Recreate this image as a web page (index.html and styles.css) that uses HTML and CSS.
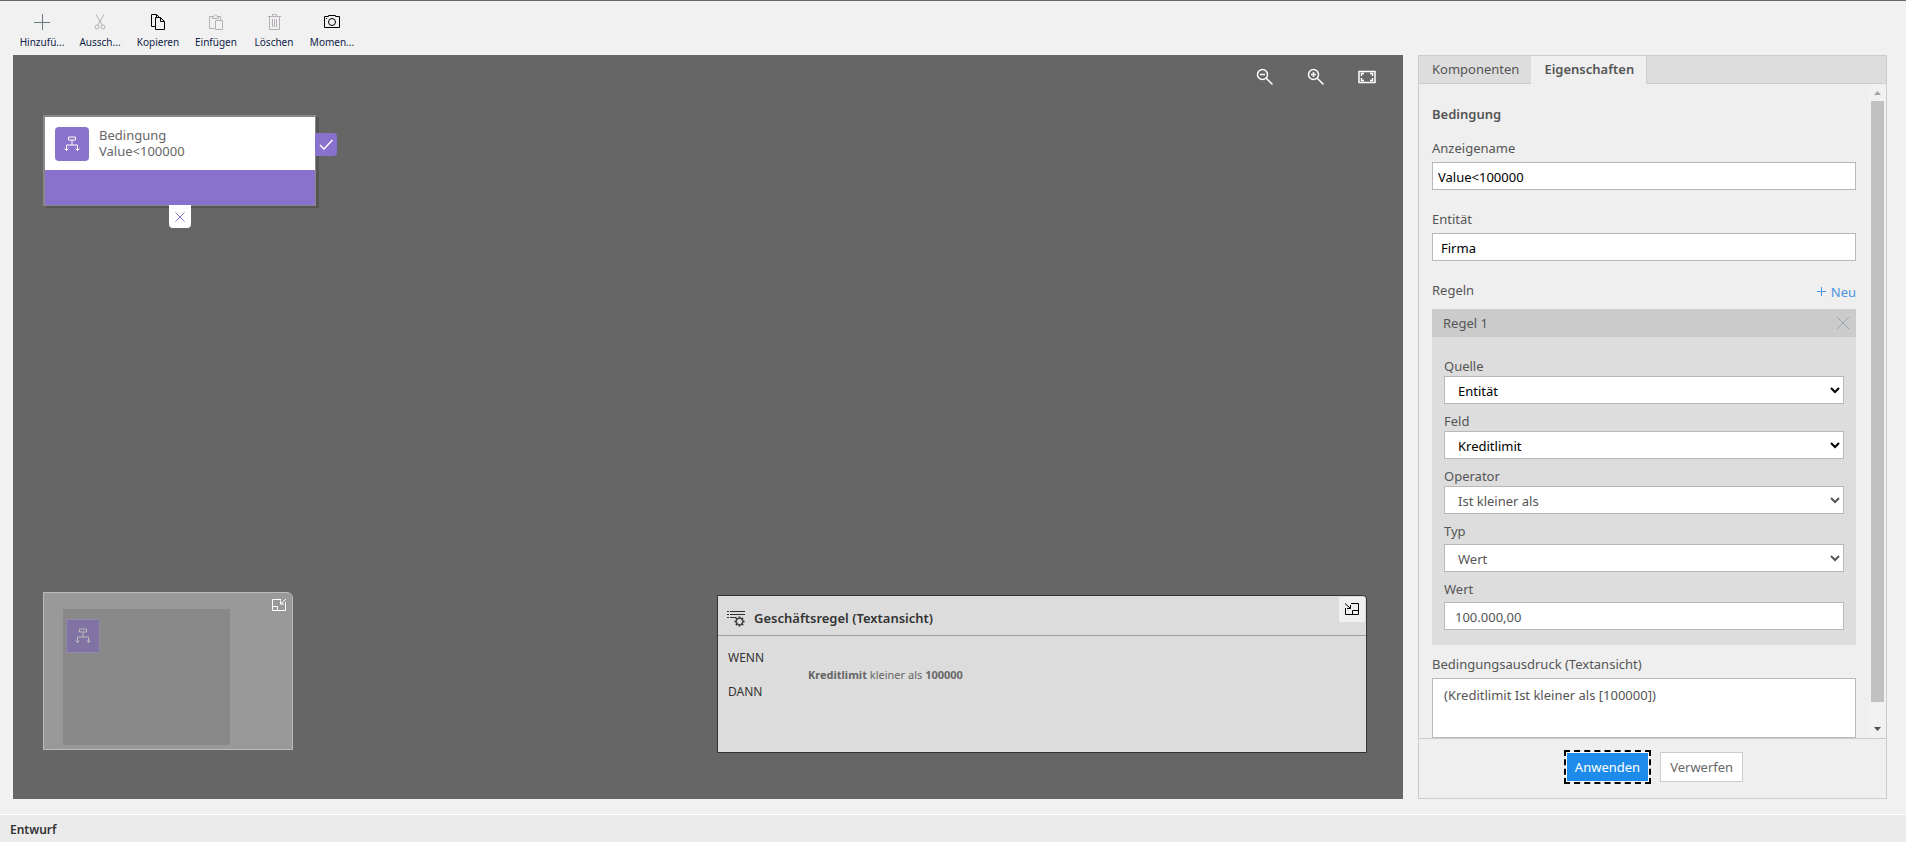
FILE: index.html
```html
<!DOCTYPE html>
<html lang="de">
<head>
<meta charset="utf-8">
<title>Geschäftsregel</title>
<link rel="stylesheet" href="styles.css">
</head>
<body>
<div class="app">
  <header class="toolbar">
    <button class="tool tool-add" type="button">
      <svg class="tool-icon" viewBox="0 0 16 16"><path d="M8.500 0v16M0 8.500h16"/></svg>
      <span>Hinzufü...</span>
    </button>
    <button class="tool tool-off" type="button">
      <svg class="tool-icon" viewBox="0 0 16 16"><path d="M4 .5l6.200 10.500M12 .5L5.800 11"/><circle cx="5" cy="13" r="2"/><circle cx="11" cy="13" r="2"/></svg>
      <span>Aussch...</span>
    </button>
    <button class="tool" type="button">
      <svg class="tool-icon" viewBox="0 0 16 16"><path d="M5.500 12.500h-4V.5h5l3 3M6.500.5v3M5.500 3.500h5l4 4v8h-9zM10.500 3.500v4h4"/></svg>
      <span>Kopieren</span>
    </button>
    <button class="tool tool-off" type="button">
      <svg class="tool-icon" viewBox="0 0 16 16"><path d="M6.500 14.500h-5v-12h3M9.500 2.500h3v4M4.500 4.500v-2h1.500a1.500 1.500 0 0 1 3 0h1.500v2zM7.500 6.500h7v9h-7z"/></svg>
      <span>Einfügen</span>
    </button>
    <button class="tool tool-off" type="button">
      <svg class="tool-icon" viewBox="0 0 16 16"><path d="M2 2.500h13M6.500 2.500v-2h4v2M3.500 2.500v13h10v-13M6.500 5v8M8.500 5v8M10.500 5v8"/></svg>
      <span>Löschen</span>
    </button>
    <button class="tool" type="button">
      <svg class="tool-icon" viewBox="0 0 16 16"><path d="M.5 2.500h4v-1h7v1h4v11H.5z"/><circle cx="8" cy="8" r="3.500"/><path d="M2 4.500h1"/></svg>
      <span>Momen...</span>
    </button>
  </header>

  <main class="workspace">
    <section class="canvas" aria-label="Zeichenfläche">
      <div class="zoom-bar">
        <button class="zoom-btn" type="button" aria-label="Verkleinern">
          <svg viewBox="0 0 18 18"><circle cx="6.500" cy="6.500" r="5"/><path d="M10 10l6.500 6.500M4 6.500h5"/></svg>
        </button>
        <button class="zoom-btn" type="button" aria-label="Vergrößern">
          <svg viewBox="0 0 18 18"><circle cx="6.500" cy="6.500" r="5"/><path d="M10 10l6.500 6.500M4 6.500h5M6.500 4v5"/></svg>
        </button>
        <button class="zoom-btn" type="button" aria-label="Einpassen">
          <svg viewBox="0 0 18 18"><path d="M1 3.500h16v11H1zM3.500 8V5.500H6M3.500 10v2.500H6M14.500 8V5.500H12M14.500 10v2.500H12"/></svg>
        </button>
      </div>

      <article class="node">
        <div class="node-head">
          <span class="node-icon">
            <svg viewBox="0 0 16 16"><path d="M4.500 1h7v3h-7zM8 4v5M2.500 14.500V9h11v5.500M.5 12.500l2 2 2-2M11.500 12.500l2 2 2-2"/></svg>
          </span>
          <div class="node-text">
            <div>Bedingung</div>
            <div>Value&lt;100000</div>
          </div>
        </div>
        <div class="node-foot"></div>
        <button class="port port-yes" type="button" aria-label="Ja">
          <svg viewBox="0 0 14 14"><path d="M1 7l4 4L13.500 2"/></svg>
        </button>
        <button class="port port-no" type="button" aria-label="Nein">
          <svg viewBox="0 0 14 14"><path d="M2.500 2.500l9 9M11.500 2.500l-9 9"/></svg>
        </button>
      </article>

      <aside class="minimap" aria-label="Übersicht">
        <div class="minimap-view">
          <span class="minimap-node">
            <svg viewBox="0 0 16 16"><path d="M4.500 1h7v3h-7zM8 4v5M2.500 14.500V9h11v5.500M.5 12.500l2 2 2-2M11.500 12.500l2 2 2-2"/></svg>
          </span>
        </div>
        <button class="minimap-btn" type="button" aria-label="Übersicht verkleinern">
          <svg viewBox="0 0 16 14"><path d="M14.500 4v8.500H1.500V1.500H10M1.500 8.500h5v4M15 1L9.500 6M9.500 2.500V6H13"/></svg>
        </button>
      </aside>

      <section class="rule-text">
        <div class="rule-text-head">
          <svg class="list-icon" viewBox="0 0 18 17"><path d="M0 1.500h2M3 1.500h15M0 4.500h2M3 4.500h15M0 7.500h2M3 7.500h6"/><circle cx="12.500" cy="11.500" r="3.200"/><path class="gear-teeth" d="M12.500 6.500v2M12.500 14.500v2M7.500 11.500h2M15.500 11.500h2M9 8l1.400 1.400M14.600 13.600L16 15M9 15l1.400-1.400M14.600 9.400L16 8"/></svg>
          <h2>Geschäftsregel (Textansicht)</h2>
          <button class="corner-btn" type="button" aria-label="Textansicht verkleinern">
            <svg viewBox="0 0 15 13"><path d="M6 .5h7.500v11H.5V5M7.500 11.500v-4h6M0 .5l5.500 5M5.500 2V5.500H2"/></svg>
          </button>
        </div>
        <div class="rule-text-body">
          <div class="keyword">WENN</div>
          <div class="clause"><b>Kreditlimit</b> kleiner als <b>100000</b></div>
          <div class="keyword">DANN</div>
        </div>
      </section>
    </section>

    <aside class="panel">
      <div class="tabs" role="tablist">
        <button class="tab" type="button" role="tab" aria-selected="false">Komponenten</button>
        <button class="tab tab-active" type="button" role="tab" aria-selected="true">Eigenschaften</button>
      </div>
      <div class="panel-main">
        <form class="form" id="props">
          <h1>Bedingung</h1>
          <div class="field">
            <label for="name">Anzeigename</label>
            <input class="control control-name" id="name" type="text" value="Value&lt;100000">
          </div>
          <div class="field">
            <label for="entity">Entität</label>
            <input class="control control-entity" id="entity" type="text" value="Firma" readonly>
          </div>
          <div class="rules-head">
            <span>Regeln</span>
            <button class="new-btn" type="button"><svg viewBox="0 0 9 9"><path d="M4.500 0v9M0 4.500h9"/></svg>Neu</button>
          </div>
          <fieldset class="rule">
            <div class="rule-head">
              <span>Regel 1</span>
              <button class="close-btn" type="button" aria-label="Regel entfernen"><svg viewBox="0 0 14 14"><path d="M1 1l12 12M13 1L1 13"/></svg></button>
            </div>
            <div class="rule-body">
              <div class="row">
                <label for="source">Quelle</label>
                <select class="control select" id="source"><option>Entität</option></select>
              </div>
              <div class="row">
                <label for="attr">Feld</label>
                <select class="control select" id="attr"><option>Kreditlimit</option></select>
              </div>
              <div class="row">
                <label for="op">Operator</label>
                <select class="control select muted" id="op"><option>Ist kleiner als</option></select>
              </div>
              <div class="row row-spaced">
                <label for="type">Typ</label>
                <select class="control select muted" id="type"><option>Wert</option></select>
              </div>
              <div class="row row-spaced">
                <label for="value">Wert</label>
                <input class="control control-value muted" id="value" type="text" value="100.000,00">
              </div>
            </div>
          </fieldset>
          <div class="expression">
            <label for="expr">Bedingungsausdruck (Textansicht)</label>
            <textarea class="control control-expr muted" id="expr" readonly>(Kreditlimit Ist kleiner als [100000])</textarea>
          </div>
        </form>
        <div class="scrollbar" aria-hidden="true">
          <svg class="arrow arrow-up" viewBox="0 0 17 17"><path d="M5 11l3.500-4L12 11z"/></svg>
          <div class="track"><div class="thumb"></div></div>
          <svg class="arrow" viewBox="0 0 17 17"><path d="M5 6l3.500 4L12 6z"/></svg>
        </div>
      </div>
      <div class="panel-foot">
        <button class="btn btn-primary" type="submit" form="props">Anwenden</button>
        <button class="btn" type="reset" form="props">Verwerfen</button>
      </div>
    </aside>
  </main>

  <footer class="status">Entwurf</footer>
</div>
</body>
</html>
```

FILE: styles.css
```css
* {
  box-sizing: border-box;
}

body {
  margin: 0;
  background: #f1f1f1;
  color: #555;
  font-family: "Noto Sans", "Open Sans", sans-serif;
  font-size: 13px;
  line-height: 20px;
}

button,
input,
select,
textarea {
  font: inherit;
  color: inherit;
  margin: 0;
}

button {
  padding: 0;
  border: 0;
  background: none;
}

svg {
  display: block;
  fill: none;
  stroke: currentColor;
  stroke-width: 1;
}

h1,
h2 {
  margin: 0;
  font-size: 13px;
  font-weight: 600;
}

.app {
  display: flex;
  flex-direction: column;
  height: 100vh;
  border-top: 1px solid #666;
}

/* Toolbar */

.toolbar {
  display: flex;
  height: 54px;
  padding-left: 13px;
}

.tool {
  display: flex;
  flex-direction: column;
  align-items: center;
  gap: 4px;
  width: 58px;
  padding-top: 13px;
  color: #000;
  font-size: 10px;
  line-height: 16px;
}

.tool span {
  color: #0f2347;
}

.tool-icon {
  width: 16px;
  height: 16px;
}

.tool-add .tool-icon {
  color: #667880;
}

.tool-off .tool-icon {
  color: #b5b0b5;
}

/* Workspace */

.workspace {
  display: flex;
  flex: 1;
  gap: 15px;
  min-height: 0;
  padding: 0 19px 15px 13px;
}

.canvas {
  position: relative;
  flex: 1;
  background: #666;
}

.zoom-bar {
  display: flex;
  justify-content: flex-end;
  gap: 33px;
  padding: 13px 27px;
  color: #fff;
}

.zoom-btn svg {
  width: 18px;
  height: 18px;
  stroke-width: 1.500;
}

/* Rule node */

.node {
  position: absolute;
  left: 30px;
  top: 60px;
  width: 273px;
  border: 1px solid #888;
  border-width: 2px 1px 1px 2px;
  box-shadow: 3px 2px 0 #555;
}

.node-head {
  display: flex;
  gap: 10px;
  height: 53px;
  padding: 10px;
  background: #fff;
}

.node-icon {
  display: grid;
  place-items: center;
  width: 34px;
  height: 34px;
  border-radius: 4px;
  background: #8971ce;
  color: #fff;
}

.node-icon svg {
  width: 16px;
  height: 16px;
}

.node-text {
  color: #666;
  line-height: 16px;
}

.node-foot {
  height: 35px;
  background: #8971ce;
}

.port {
  position: absolute;
  display: grid;
  place-items: center;
  width: 22px;
  height: 23px;
}

.port svg {
  width: 14px;
  height: 14px;
}

.port-yes {
  left: 100%;
  top: 16px;
  border-radius: 0 4px 4px 0;
  background: #8971ce;
  color: #fff;
}

.port-yes svg {
  stroke-width: 1.500;
}

.port-no {
  left: 124px;
  top: 100%;
  border-radius: 0 0 4px 4px;
  background: #fff;
  color: #8971ce;
}

/* Overview map */

.minimap {
  position: absolute;
  left: 30px;
  bottom: 49px;
  display: flex;
  align-items: flex-start;
  justify-content: space-between;
  width: 250px;
  height: 158px;
  padding: 5px 5px 5px 19px;
  border: 1px solid #bbb;
  border-radius: 0 6px 0 0;
  background: #999;
}

.minimap-view {
  width: 167px;
  height: 136px;
  margin-top: 11px;
  padding: 10px 3px;
  background: #888;
}

.minimap-node {
  display: grid;
  place-items: center;
  width: 34px;
  height: 34px;
  border: 1px solid #928ba3;
  background: #8073a3;
  color: #bbb;
}

.minimap-node svg {
  width: 16px;
  height: 16px;
}

.minimap-btn {
  color: #fff;
}

.minimap-btn svg {
  width: 16px;
  height: 14px;
}

/* Text view */

.rule-text {
  position: absolute;
  right: 36px;
  bottom: 46px;
  width: 650px;
  height: 158px;
  border: 1px solid #333;
  border-radius: 0 4px 0 0;
  background: #dcdcdc;
  color: #333;
}

.rule-text-head {
  display: flex;
  align-items: center;
  gap: 9px;
  height: 40px;
  padding: 5px 1px 0 9px;
  border-bottom: 1px solid #a0a0a0;
}

.list-icon {
  width: 18px;
  height: 17px;
}

.gear-teeth {
  stroke-width: 2;
}

.corner-btn {
  display: grid;
  place-items: center;
  align-self: flex-start;
  width: 26px;
  height: 25px;
  margin: -4px 0 0 auto;
  background: #f0f0f0;
  color: #000;
}

.corner-btn svg {
  width: 15px;
  height: 13px;
}

.rule-text-body {
  padding: 13px 10px;
  font-size: 12px;
  line-height: 17px;
}

.clause {
  padding-left: 80px;
  color: #666;
  font-size: 11px;
}

/* Properties panel */

.panel {
  display: flex;
  flex-direction: column;
  width: 469px;
  border: 1px solid #ccc;
  background: #efefef;
}

.tabs {
  display: flex;
  height: 28px;
  background: #ddd;
  box-shadow: inset 0 -1px #ccc;
}

.tab {
  padding: 0 12px 2px 13px;
}

.tab-active {
  border-right: 1px solid #ccc;
  background: #efefef;
  font-weight: 600;
}

.panel-main {
  display: flex;
  flex: 1;
  min-height: 0;
}

.form {
  display: flex;
  flex: 1;
  flex-direction: column;
  padding: 20px 13px 0;
  overflow: auto;
  scrollbar-width: none;
}

.form h1 {
  margin-bottom: 14px;
}

.field {
  display: flex;
  flex-direction: column;
  gap: 4px;
  margin-bottom: 19px;
}

.control {
  display: block;
  width: 100%;
  height: 28px;
  border: 1px solid #b8b8b8;
  border-radius: 0;
  background: #fff;
  color: #000;
}

.muted {
  color: #555;
}

.control-name {
  padding: 2px 5px 0;
}

.control-entity {
  padding: 2px 8px 0;
}

.control-value {
  padding: 1px 10px 0;
}

.select {
  padding: 2px 0 0 9px;
}

.rules-head {
  display: flex;
  justify-content: space-between;
  margin-bottom: 9px;
}

.new-btn {
  display: flex;
  align-items: center;
  gap: 5px;
  padding-top: 3px;
  height: 20px;
  color: #4a94e0;
}

.new-btn svg {
  width: 9px;
  height: 9px;
}

.rule {
  margin: 0;
  padding: 0;
  border: 0;
  background: #ddd;
}

.rule-head {
  display: flex;
  align-items: center;
  justify-content: space-between;
  height: 28px;
  padding: 0 6px 0 11px;
  background: #cbcbcb;
}

.close-btn {
  color: #9aa3b3;
}

.close-btn svg {
  width: 14px;
  height: 14px;
}

.rule-body {
  display: flex;
  flex-direction: column;
  gap: 7px;
  padding: 19px 12px 15px;
}

.row {
  display: flex;
  flex-direction: column;
}

.row-spaced {
  gap: 3px;
}

.expression {
  display: flex;
  flex-direction: column;
  gap: 4px;
  padding-top: 9px;
}

.control-expr {
  height: 60px;
  padding: 6px 11px;
  resize: none;
}

.scrollbar {
  display: flex;
  flex-direction: column;
  width: 17px;
  background: #f1f1f1;
}

.arrow {
  width: 17px;
  height: 17px;
  fill: #505050;
  stroke: none;
}

.arrow-up {
  fill: #a3a3a3;
}

.track {
  flex: 1;
  padding: 0 2px;
}

.thumb {
  height: 97%;
  background: #c1c1c1;
}

.panel-foot {
  display: flex;
  justify-content: center;
  gap: 11px;
  height: 60px;
  padding: 13px 0 0 4px;
  border-top: 1px solid #ccc;
}

.btn {
  height: 30px;
  padding: 0 9px;
  border: 1px solid #ccc;
  background: #fff;
  color: #666;
}

.btn-primary {
  padding: 0 8px;
  border-color: #fff;
  outline: 2px dashed #000;
  background: #1e8bea;
  color: #fff;
}

/* Status bar */

.status {
  height: 28px;
  padding: 5px 10px 0;
  border-top: 1px solid #fff;
  background: #ebebeb;
  color: #333;
  font-size: 12px;
  font-weight: 600;
}
```
